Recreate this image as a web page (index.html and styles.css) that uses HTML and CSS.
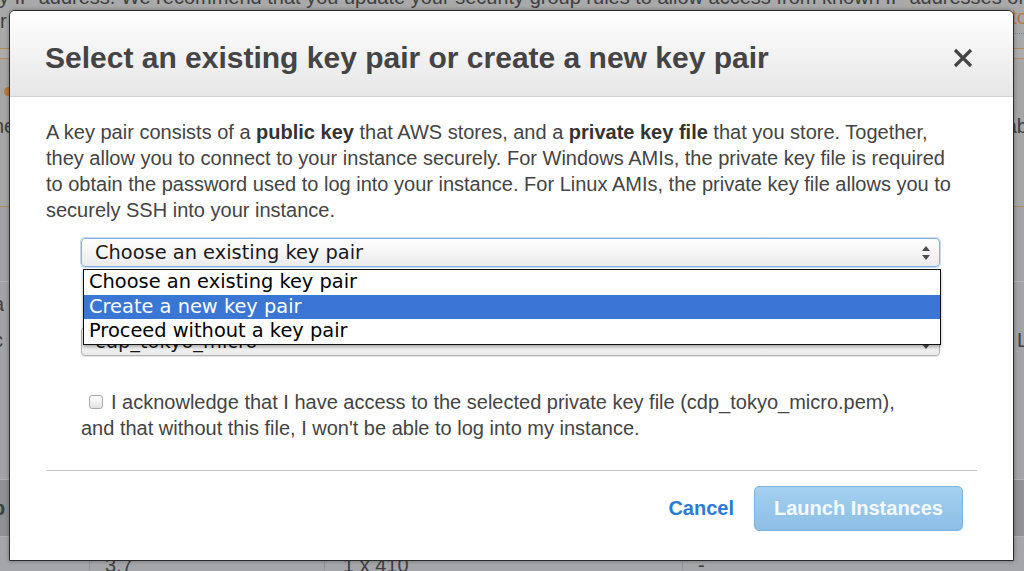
FILE: index.html
```html
<!DOCTYPE html>
<html lang="en">
<head>
<meta charset="utf-8">
<title>Select an existing key pair or create a new key pair</title>
<link rel="stylesheet" href="styles.css">
</head>
<body>
<div class="page">
  <div class="bg-alert">
    <p class="bg-line">y IP address. We recommend that you update your security group rules to allow access from known IP addresses only.</p>
    <div class="bg-line2"><span>r</span><a class="bg-link">to</a></div>
  </div>
  <div class="bg-nav"></div>
  <div class="bg-summary">
    <span class="bg-dot"></span>
    <div class="bg-split"><span>ne</span><span>ab</span></div>
  </div>
  <div class="bg-form">
    <div class="bg-form-row first"><span>a</span><span></span></div>
    <div class="bg-form-row"><span>c</span><span>L</span></div>
    <div class="bg-form-row"><span>:</span><span></span></div>
  </div>
  <div class="bg-thead"><span>p</span></div>
  <div class="bg-row">
    <div class="bg-cell c0"></div>
    <div class="bg-cell c1">3.7</div>
    <div class="bg-cell c2">1 x 410</div>
    <div class="bg-cell c3">-</div>
  </div>
</div>

<div class="modal">
  <div class="modal-header">
    <h1 class="modal-title">Select an existing key pair or create a new key pair</h1>
    <button class="close" aria-label="Close">
      <svg width="20" height="20" viewBox="0 0 20 20"><path d="M2 2 L18 18 M18 2 L2 18" stroke="#444" stroke-width="3.2" stroke-linecap="butt" fill="none"/></svg>
    </button>
  </div>
  <div class="modal-body">
    <p class="intro">A key pair consists of a <b>public key</b> that AWS stores, and a <b>private key file</b> that you store. Together, they allow you to connect to your instance securely. For Windows AMIs, the private key file is required to obtain the password used to log into your instance. For Linux AMIs, the private key file allows you to securely SSH into your instance.</p>
    <div class="field">
      <div class="select focused">
        <span>Choose an existing key pair</span>
        <svg class="arrows" width="10" height="16" viewBox="0 0 10 16"><path d="M1 6 L5 1 L9 6 Z M1 10 L5 15 L9 10 Z" fill="#4a4a4a"/></svg>
      </div>
      <div class="select second">
        <span>cdp_tokyo_micro</span>
        <svg class="arrows" width="10" height="16" viewBox="0 0 10 16"><path d="M1 6 L5 1 L9 6 Z M1 10 L5 15 L9 10 Z" fill="#4a4a4a"/></svg>
      </div>
      <ul class="dropdown">
        <li>Choose an existing key pair</li>
        <li class="active">Create a new key pair</li>
        <li>Proceed without a key pair</li>
      </ul>
    </div>
    <p class="ack"><span class="checkbox"></span>I acknowledge that I have access to the selected private key file (cdp_tokyo_micro.pem),<br>and that without this file, I won't be able to log into my instance.</p>
  </div>
  <div class="modal-footer">
    <a class="cancel">Cancel</a>
    <button class="launch">Launch Instances</button>
  </div>
</div>
</body>
</html>
```

FILE: styles.css
```css
* { box-sizing: border-box; }
html, body { margin: 0; padding: 0; }
body {
  width: 1024px;
  height: 571px;
  overflow: hidden;
  position: relative;
  background: #a3a5a9;
  font-family: "Liberation Sans", Arial, Helvetica, sans-serif;
  color: #444;
}

/* ---------- dimmed page behind the dialog ---------- */
.page { width: 1024px; color: #3f4042; font-size: 20px; }
.bg-alert { height: 49px; background: #a9a9a9; border-bottom: 1px solid #b98a55; overflow: hidden; }
.bg-line { margin: -16px 0 0 -1px; line-height: 26px; white-space: nowrap; }
.bg-line2 { display: flex; justify-content: space-between; line-height: 26px; margin-top: -2px; }
.bg-link { color: #b8793b; border-bottom: 1px dotted #b8793b; line-height: 18px; margin-right: -4px; }
.bg-nav { height: 10px; background: #acacac; border-bottom: 1px solid #b98a55; }
.bg-summary { height: 148px; background: #a6a6a6; border-bottom: 1px solid #b98a55; padding-top: 28px; }
.bg-dot { display: block; width: 9px; height: 9px; border-radius: 50%; background: #b87a3c; margin-left: 4px; }
.bg-split { display: flex; justify-content: space-between; margin: 20px -4px 0 -7px; line-height: 20px; }
.bg-form { height: 272px; background: #a1a3a7; padding-top: 74px; }
.bg-form > .first { border-top: 1px solid #b2b4b7; }
.bg-form-row { display: flex; justify-content: space-between; margin: 0 -4px 0 -7px; padding-top: 12px; height: 37px; line-height: 20px; }
.bg-thead { height: 57px; background: #8f9196; border-top: 1px solid #b0b2b5; font-weight: bold; line-height: 57px; margin-left: -7px; }
.bg-row { height: 34px; display: flex; background: #a4a6aa; border-top: 1px solid #b0b2b5; }
.bg-cell { padding: 18px 0 0 15px; line-height: 20px; border-right: 1px solid #8f9196; }
.bg-cell.c0 { width: 90px; }
.bg-cell.c1 { width: 235px; }
.bg-cell.c2 { width: 358px; padding-left: 18px; }
.bg-cell.c3 { flex: 1; border-right: 0; }

/* ---------- dialog ---------- */
.modal {
  position: absolute;
  left: 9px;
  top: 10px;
  width: 1005px;
  height: 551px;
  background: #fff;
  border: 1px solid #2b2b2b;
  border-radius: 6px 6px 0 0;
  display: flex;
  flex-direction: column;
  overflow: hidden;
  box-shadow: 0 0 4px rgba(0, 0, 0, 0.35);
}
.modal-header {
  flex: none;
  height: 86px;
  display: flex;
  justify-content: space-between;
  align-items: flex-start;
  padding: 31px 40px 0 35px;
  background: linear-gradient(#ffffff, #e6e6e6);
  border-bottom: 1px solid #d4d4d4;
}
.modal-title {
  margin: 0;
  font-size: 30px;
  line-height: 32px;
  font-weight: bold;
  color: #444;
}
.close {
  margin-top: 6px;
  padding: 0;
  border: 0;
  background: none;
  width: 20px;
  height: 20px;
  display: block;
}
.close svg { display: block; }

.modal-body { padding: 22px 36px 0 36px; }
.intro { margin: 0; max-width: 912px; font-size: 20px; line-height: 26px; color: #444; }
.intro b { color: #333; }

.field { position: relative; margin: 15px 0 0 35px; width: 859px; }
.select {
  height: 29px;
  display: flex;
  align-items: center;
  justify-content: space-between;
  padding: 0 8px 0 13px;
  border: 1px solid #b3b3b3;
  border-radius: 4px;
  background: linear-gradient(#ffffff, #ebebeb);
  font-family: "DejaVu Sans", Verdana, sans-serif;
  font-size: 19.4px;
  color: #1a1a1a;
  box-shadow: 0 1px 1px rgba(0, 0, 0, 0.12);
}
.select.focused { border-color: #86aee0; box-shadow: 0 0 0 1px rgba(134, 174, 224, 0.45); }
.select.second { margin-top: 60px; }
.arrows { display: block; flex: none; }

.dropdown {
  position: absolute;
  top: 31px;
  left: 2px;
  width: 858px;
  margin: 0;
  padding: 0;
  list-style: none;
  background: #fff;
  border: 1px solid #111;
  box-shadow: 0 2px 3px rgba(0, 0, 0, 0.3);
  font-family: "DejaVu Sans", Verdana, sans-serif;
  font-size: 19.4px;
  color: #000;
}
.dropdown li { height: 24.5px; line-height: 24px; padding-left: 5px; white-space: nowrap; }
.dropdown li.active { background: #3a76d4; color: #fff; }

.ack { margin: 33px 0 0 35px; font-size: 20px; line-height: 26px; color: #444; }
.checkbox {
  display: inline-block;
  width: 14px;
  height: 14px;
  margin: 0 8px 0 8px;
  border: 1px solid #a9a9a9;
  border-radius: 3px;
  background: linear-gradient(#ffffff, #e3e3e3);
  box-shadow: inset 0 1px 1px rgba(255,255,255,0.8);
}

.modal-footer {
  margin: auto 36px 0 36px;
  border-top: 1px solid #c6c6c6;
  padding: 15px 14px 29px 0;
  display: flex;
  justify-content: flex-end;
  align-items: center;
  gap: 20px;
}
.cancel { font-size: 20px; font-weight: bold; color: #2b7bd5; }
.launch {
  width: 209px;
  height: 45px;
  border: 1px solid #80b3dc;
  border-radius: 5px;
  background: linear-gradient(#a4d0f1, #8dbee5);
  color: #f5faff;
  font-family: "Liberation Sans", Arial, sans-serif;
  font-size: 20px;
  font-weight: bold;
  padding: 0;
}
```
